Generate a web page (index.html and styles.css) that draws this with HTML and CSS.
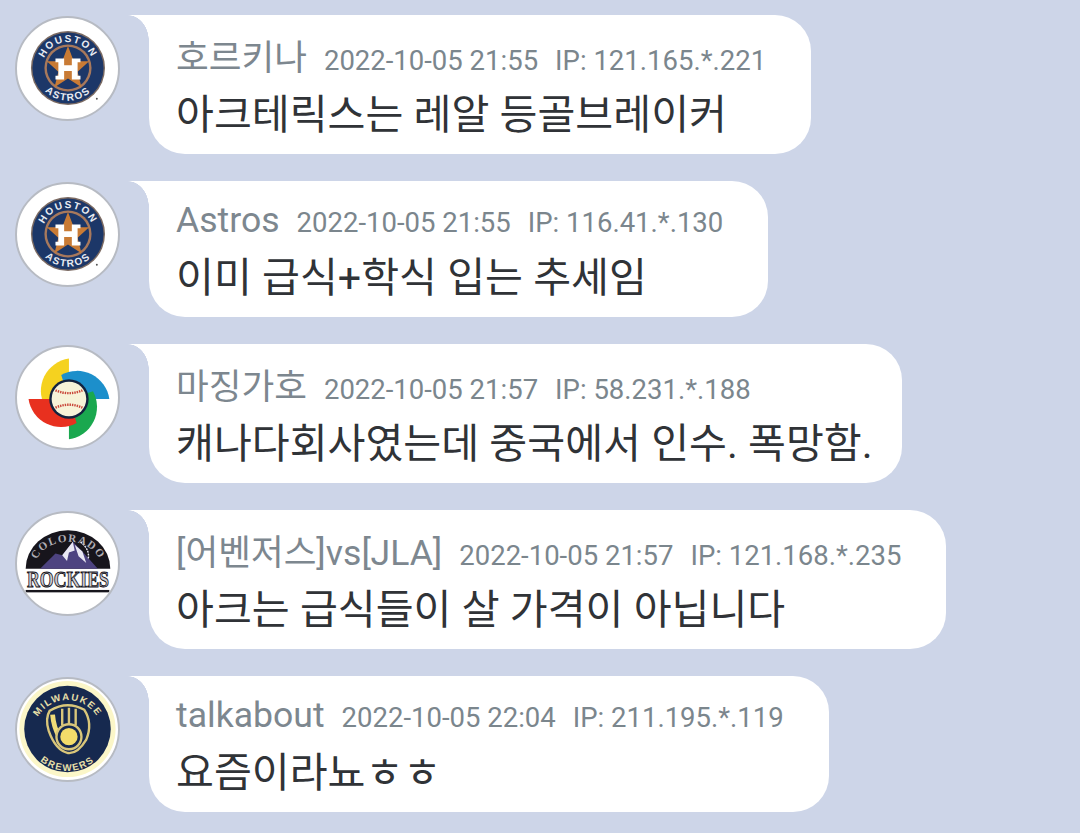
FILE: index.html
```html
<!DOCTYPE html>
<html lang="ko">
<head>
    <meta charset="UTF-8">
    <meta name="viewport" content="width=device-width, initial-scale=1.0">
    <title>댓글</title>
    <link rel="stylesheet" href="styles.css">
</head>
<body>
    <svg class="defs" width="0" height="0" aria-hidden="true">
        <defs>
            <path id="astros-top" d="M26 52 A27 27 0 0 1 80 52"/>
            <path id="astros-bottom" d="M19 52 A34 34 0 0 0 87 52"/>
            <symbol id="astros" viewBox="0 0 105 105">
                <circle cx="53" cy="52" r="38.5" fill="#7b6a62"/>
                <circle cx="53" cy="52" r="37" fill="#1c3768"/>
                <circle cx="53" cy="52" r="24.5" fill="#a8795c"/>
                <circle cx="53" cy="52" r="22" fill="#1c3768"/>
                <path d="M53 29 L59 45 L75 45 L63 56 L67 72 L53 63 L39 72 L43 56 L31 45 L47 45 Z" fill="#c97b35"/>
                <path d="M40 42 H49 V49 H57 V42 H66 V46 H63 V60 H66 V64 H57 V55 H49 V64 H40 V60 H43 V46 H40 Z" fill="#fff"/>
                <text class="logo-text astros-text"><textPath href="#astros-top" startOffset="50%" text-anchor="middle">HOUSTON</textPath></text>
                <text class="logo-text astros-text"><textPath href="#astros-bottom" startOffset="50%" text-anchor="middle">ASTROS</textPath></text>
                <circle cx="83" cy="84" r="1" fill="#555"/>
            </symbol>
            <path id="rockies-arc" d="M19 56 A34 26 0 0 1 87 56"/>
            <path id="brewers-top" d="M17 52 A36 36 0 0 1 88 52"/>
            <path id="brewers-bottom" d="M9 52 A43.5 43.5 0 0 0 96 52" />
            <path id="wbc-blade" d="M42 0 A34 34 0 0 0 -8 -25 L0 0 Z"/>
        </defs>
    </svg>

    <main class="thread">
        <article class="comment">
            <div class="avatar"><svg viewBox="0 0 105 105"><use href="#astros"/></svg></div>
            <div class="bubble bubble-tall">
                <div class="meta"><span class="name">호르키나</span><span class="stamp">2022-10-05 21:55</span><span class="stamp">IP: 121.165.*.221</span></div>
                <p class="text">아크테릭스는 레알 등골브레이커</p>
            </div>
        </article>

        <article class="comment">
            <div class="avatar"><svg viewBox="0 0 105 105"><use href="#astros"/></svg></div>
            <div class="bubble">
                <div class="meta"><span class="name">Astros</span><span class="stamp">2022-10-05 21:55</span><span class="stamp">IP: 116.41.*.130</span></div>
                <p class="text">이미 급식+학식 입는 추세임</p>
            </div>
        </article>

        <article class="comment">
            <div class="avatar">
                <svg viewBox="0 0 105 105">
                    <g transform="translate(54 54)">
                        <use href="#wbc-blade" fill="#f5d21f" transform="rotate(-90)"/>
                        <use href="#wbc-blade" fill="#1c8fcb"/>
                        <use href="#wbc-blade" fill="#1aa84f" transform="rotate(90)"/>
                        <use href="#wbc-blade" fill="#e8301f" transform="rotate(180)"/>
                        <circle r="20.5" fill="#13233f"/>
                        <circle r="18" fill="#f7f3d8"/>
                        <path d="M-14 -9 Q0 -3 14 -9" class="stitch"/>
                        <path d="M-14 9 Q0 3 14 9" class="stitch"/>
                    </g>
                </svg>
            </div>
            <div class="bubble bubble-tall">
                <div class="meta"><span class="name">마징가호</span><span class="stamp">2022-10-05 21:57</span><span class="stamp">IP: 58.231.*.188</span></div>
                <p class="text">캐나다회사였는데 중국에서 인수. 폭망함.</p>
            </div>
        </article>

        <article class="comment">
            <div class="avatar">
                <svg viewBox="0 0 105 105">
                    <path d="M9 58 A44 40 0 0 1 97 58 Z" fill="#17151c"/>
                    <path d="M24 58 L40 42 L47 44 L58 30 L68 40 L84 58 Z" fill="#4d4380"/>
                    <path d="M47 44 L58 30 L60 39 L54 41 L52 50 Z M60 33 L68 40 L72 52 L64 45 Z" fill="#e9e7f2"/>
                    <path d="M66 30 Q76 38 74 48" class="rockies-seam"/>
                    <text class="logo-text rockies-arc"><textPath href="#rockies-arc" startOffset="50%" text-anchor="middle">COLORADO</textPath></text>
                    <text class="rockies-word" transform="translate(53 77) scale(1 1.3)" text-anchor="middle">ROCKIES</text>
                    <rect x="9" y="80" width="87" height="2.5" fill="#17151c"/>
                </svg>
            </div>
            <div class="bubble bubble-tall">
                <div class="meta"><span class="name">[어벤저스]vs[JLA]</span><span class="stamp">2022-10-05 21:57</span><span class="stamp">IP: 121.168.*.235</span></div>
                <p class="text">아크는 급식들이 살 가격이 아닙니다</p>
            </div>
        </article>

        <article class="comment">
            <div class="avatar">
                <svg viewBox="0 0 105 105">
                    <circle cx="52.5" cy="52" r="50" fill="#fbf6c8"/>
                    <circle cx="52.5" cy="52" r="45" fill="#16294f"/>
                    <text class="logo-text brewers-text"><textPath href="#brewers-top" startOffset="50%" text-anchor="middle">MILWAUKEE</textPath></text>
                    <text class="logo-text brewers-text"><textPath href="#brewers-bottom" startOffset="50%" text-anchor="middle">BREWERS</textPath></text>
                    <path d="M34 33 Q52 22 70 32 Q79 46 72 63 Q63 78 53 77 Q40 74 33 54 Q29 41 34 33 Z" fill="#16294f" stroke="#d9c67a" stroke-width="2.5"/>
                    <path d="M37 37 Q38 50 44 60" fill="none" stroke="#f0dc78" stroke-width="5"/>
                    <path d="M47 31 V48 M54 30 V47 M61 31 V48" fill="none" stroke="#d9c67a" stroke-width="2.5"/>
                    <circle cx="54" cy="60" r="13" fill="#16294f" stroke="#d9c67a" stroke-width="2.5"/>
                    <circle cx="54" cy="60" r="9" fill="#f3dc6a"/>
                </svg>
            </div>
            <div class="bubble">
                <div class="meta"><span class="name">talkabout</span><span class="stamp">2022-10-05 22:04</span><span class="stamp">IP: 211.195.*.119</span></div>
                <p class="text">요즘이라뇨ㅎㅎ</p>
            </div>
        </article>
    </main>
</body>
</html>
```

FILE: styles.css
```css
html, body {
    margin: 0;
    padding: 0;
    background: #cdd5e8;
    font-family: Roboto, "Noto Sans CJK KR", sans-serif;
}

.defs {
    display: block;
    height: 0;
}

.thread {
    display: flex;
    flex-direction: column;
    gap: 27px;
    padding: 15px 0 0 15px;
}

.comment {
    display: flex;
    align-items: flex-start;
    gap: 29px;
}

.avatar {
    flex: none;
    width: 101px;
    height: 101px;
    margin-top: 1px;
    border: 2px solid #b7bbc3;
    border-radius: 50%;
    background: #fff;
    overflow: hidden;
}

.avatar svg {
    display: block;
    width: 101px;
    height: 101px;
}

.bubble {
    position: relative;
    padding: 20px 29px 12px 27px;
    background: #fff;
    border-radius: 0 36px 36px 36px;
}

/* little tail on the top left corner */
.bubble::before {
    content: "";
    position: absolute;
    top: 0;
    left: -21px;
    width: 21px;
    height: 26px;
    background: radial-gradient(ellipse 21px 26px at 0 100%, transparent 98%, #fff 100%);
}

.meta {
    display: flex;
    align-items: baseline;
    gap: 17px;
    height: 39px;
    line-height: 39px;
    padding-right: 16px;
    white-space: nowrap;
}

.bubble-tall .meta {
    height: 46px;
    line-height: 46px;
}

.name {
    font-size: 35.6px;
    color: #7d878f;
}

.stamp {
    font-size: 27.5px;
    color: #7b868d;
}

.text {
    margin: 11px 0 0;
    font-size: 41.2px;
    line-height: 54px;
    color: #303337;
    white-space: nowrap;
}

.bubble-tall .text {
    margin-top: 7px;
}

.logo-text {
    font-family: "Liberation Sans", sans-serif;
    font-weight: 700;
}

.astros-text {
    font-size: 10.5px;
    letter-spacing: 1.6px;
    fill: #e8ebf2;
}

.stitch {
    fill: none;
    stroke: #c9473a;
    stroke-width: 2.5;
    stroke-dasharray: 1.5 1;
}

.rockies-arc {
    font-size: 11.5px;
    letter-spacing: 1.4px;
    fill: #b0aeb4;
    font-family: "Liberation Serif", serif;
}

.rockies-seam {
    fill: none;
    stroke: #e9e7f2;
    stroke-width: 1.5;
    stroke-dasharray: 2 1;
}

.rockies-word {
    font-family: "Liberation Serif", serif;
    font-weight: 700;
    font-size: 18.5px;
    fill: #cfcdd3;
    stroke: #17151c;
    stroke-width: 0.8;
}

.brewers-text {
    font-size: 10px;
    letter-spacing: 1.5px;
    fill: #e6dfa8;
}
```
